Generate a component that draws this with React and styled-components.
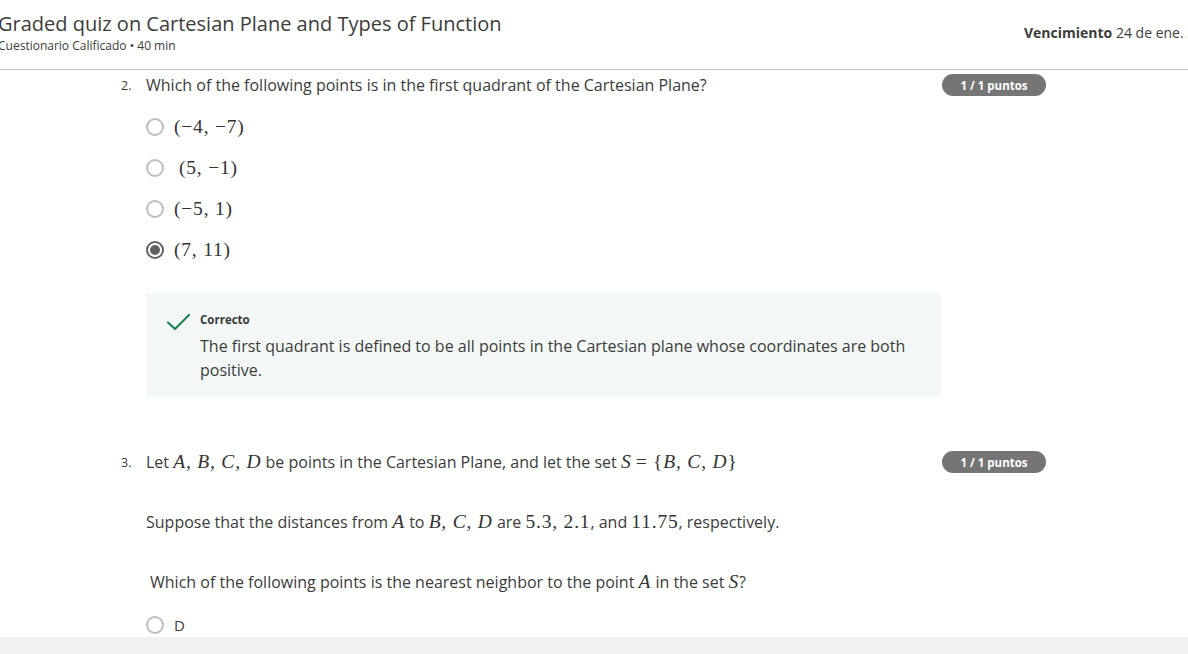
import styled, { createGlobalStyle } from 'styled-components';

const GlobalStyle = createGlobalStyle`
	html, body {
		margin: 0;
		padding: 0;
		background: #ffffff;
		overflow: hidden;
	}
	body {
		font-family: 'Open Sans', 'Liberation Sans', sans-serif;
		color: #373a3c;
	}
`;

const Page = styled.div`
	width: 1188px;
	height: 654px;
	display: flex;
	flex-direction: column;
	overflow: hidden;
`;

const Header = styled.header`
	height: 70px;
	border-bottom: 1px solid #c8c8c8;
	display: flex;
	align-items: flex-start;
	box-sizing: border-box;
	flex-shrink: 0;
`;

const TitleBlock = styled.div`
	flex: 1;
	margin-left: -2px;
	padding-top: 10px;
`;

const Title = styled.h1`
	margin: 0;
	font-size: 20px;
	font-weight: 400;
	line-height: 27px;
	color: #3c3c3c;
	white-space: nowrap;
`;

const Subtitle = styled.div`
	font-size: 12px;
	line-height: 16px;
	color: #3c3c3c;
	margin-top: 1px;
`;

const Due = styled.div`
	width: 164px;
	flex-shrink: 0;
	overflow: hidden;
	padding-top: 23px;
	font-size: 14px;
	color: #3c3c3c;
	white-space: nowrap;

	b {
		font-weight: 700;
	}
`;

const Body = styled.main`
	flex: 1;
	padding-left: 121px;
	overflow: hidden;
`;

const Question = styled.section`
	margin-top: ${p => p.$top}px;
`;

const QuestionHead = styled.div`
	display: grid;
	grid-template-columns: 25px 796px 104px;
	align-items: center;
	min-height: 22px;
`;

const Num = styled.span`
	font-size: 12.5px;
	color: #3c3c3c;
`;

const Prompt = styled.div`
	font-size: 16px;
	color: #3c3c3c;
	white-space: nowrap;
`;

const Badge = styled.span`
	height: 22px;
	border-radius: 11px;
	background: #757575;
	color: #ffffff;
	font-size: 11.5px;
	font-weight: 700;
	display: flex;
	align-items: center;
	justify-content: center;
`;

const Math = styled.span`
	font-family: 'Liberation Serif', 'DejaVu Serif', serif;
	font-size: 19.5px;
	letter-spacing: 0.8px;
	font-style: ${p => (p.$upright ? 'normal' : 'italic')};
	color: #333;
`;

const Para = styled.p`
	margin: ${p => p.$top}px 0 0 ${p => 25 + (p.$indent || 0)}px;
	font-size: 16px;
	color: #3c3c3c;
	white-space: nowrap;
	line-height: 22px;
`;

const Options = styled.div`
	margin: ${p => p.$top}px 0 0 25px;
	display: flex;
	flex-direction: column;
	gap: 18px;
`;

const Option = styled.label`
	display: flex;
	align-items: center;
	gap: 10px;
	height: 23px;
`;

const Radio = styled.span`
	width: 18px;
	height: 18px;
	box-sizing: border-box;
	border-radius: 50%;
	border: 2px solid ${p => (p.$checked ? '#616161' : '#bdbdbd')};
	display: flex;
	align-items: center;
	justify-content: center;
	flex-shrink: 0;

	&::after {
		content: '';
		display: ${p => (p.$checked ? 'block' : 'none')};
		width: 10px;
		height: 10px;
		border-radius: 50%;
		background: #616161;
	}
`;

const OptionText = styled.span`
	padding-left: ${p => p.$pad || 0}px;
	font-size: 15px;
	color: #3c3c3c;
`;

const Feedback = styled.div`
	margin: 32px 0 0 25px;
	width: 795px;
	height: 104px;
	box-sizing: border-box;
	background: #f3f8f6;
	padding: 17px 20px 0 20px;
	display: flex;
	gap: 8px;
`;

const FeedbackText = styled.div`
	font-size: 16px;
	line-height: 24px;
	color: #3c3c3c;
`;

const FeedbackLabel = styled.div`
	font-size: 11.5px;
	font-weight: 700;
	line-height: 20px;
	margin-bottom: 4px;
`;

const Footer = styled.footer`
	height: 17px;
	background: #f0f0f0;
	flex-shrink: 0;
`;

const Check = () => (
	<svg width="26" height="20" viewBox="0 0 26 20" style={{ marginTop: 2 }}>
		<path d="M2 10.5 L9 17 L23 3" fill="none" stroke="#1f8354" strokeWidth="2.2" strokeLinecap="round" strokeLinejoin="round" />
	</svg>
);

const m = s => <Math>{s}</Math>;
const n = s => <Math $upright>{s}</Math>;

const options = [
	{ label: '(−4, −7)' },
	{ label: '(5, −1)', pad: 5 },
	{ label: '(−5, 1)' },
	{ label: '(7, 11)', checked: true },
];

const App = () => (
	<>
		<GlobalStyle />
		<Page>
			<Header>
				<TitleBlock>
					<Title>Graded quiz on Cartesian Plane and Types of Function</Title>
					<Subtitle>Cuestionario Calificado • 40 min</Subtitle>
				</TitleBlock>
				<Due>
					<b>Vencimiento</b> 24 de ene. 23:59 PST
				</Due>
			</Header>
			<Body>
				<Question $top={4}>
					<QuestionHead>
						<Num>2.</Num>
						<Prompt>Which of the following points is in the first quadrant of the Cartesian Plane?</Prompt>
						<Badge>1 / 1 puntos</Badge>
					</QuestionHead>
					<Options $top={19}>
						{options.map(o => (
							<Option key={o.label}>
								<Radio $checked={o.checked} />
								<OptionText $pad={o.pad}>
									<Math $upright>{o.label}</Math>
								</OptionText>
							</Option>
						))}
					</Options>
					<Feedback>
						<Check />
						<div>
							<FeedbackLabel>Correcto</FeedbackLabel>
							<FeedbackText>
								The first quadrant is defined to be all points in the Cartesian plane whose coordinates are both
								<br />
								positive.
							</FeedbackText>
						</div>
					</Feedback>
				</Question>
				<Question $top={54}>
					<QuestionHead>
						<Num>3.</Num>
						<Prompt>
							Let {m('A, B, C, D')} be points in the Cartesian Plane, and let the set {m('S')} {n('= {')}
							{m('B, C, D')}
							{n('}')}
						</Prompt>
						<Badge>1 / 1 puntos</Badge>
					</QuestionHead>
					<Para $top={38}>
						Suppose that the distances from {m('A')} to {m('B, C, D')} are {n('5.3, 2.1')}, and {n('11.75')},
						respectively.
					</Para>
					<Para $top={38} $indent={4}>
						Which of the following points is the nearest neighbor to the point {m('A')} in the set {m('S')}?
					</Para>
					<Options $top={20}>
						<Option>
							<Radio />
							<OptionText>D</OptionText>
						</Option>
					</Options>
				</Question>
			</Body>
			<Footer />
		</Page>
	</>
);

export default App;
